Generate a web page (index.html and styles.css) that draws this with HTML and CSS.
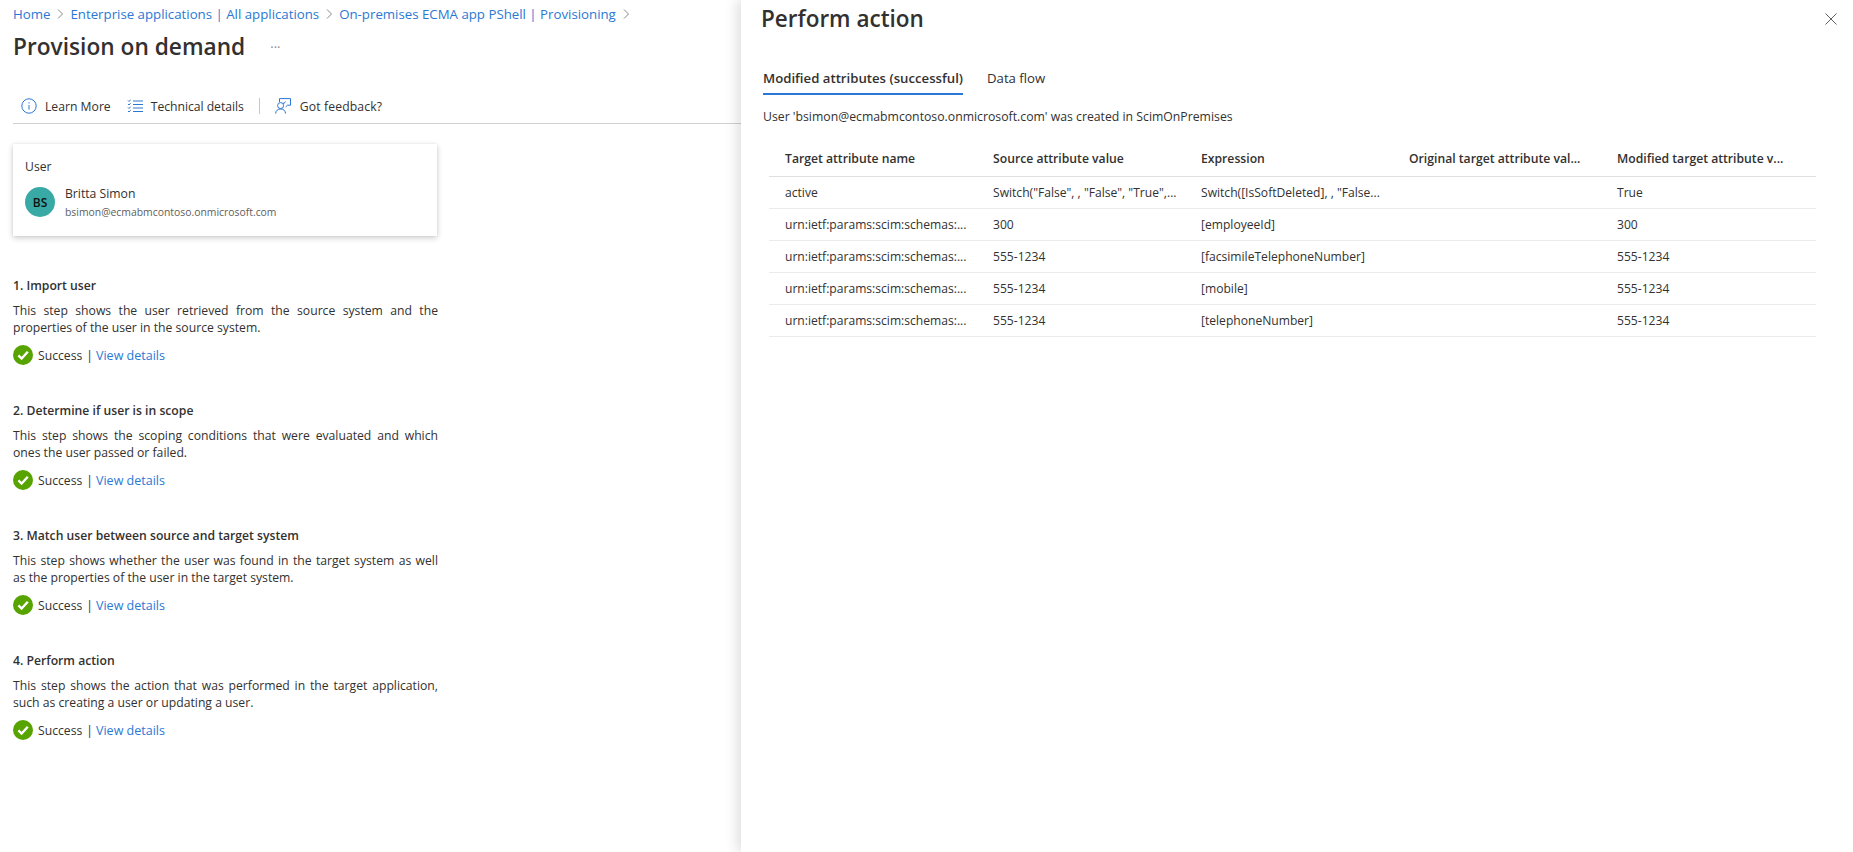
FILE: index.html
```html
<!DOCTYPE html>
<html lang="en">
<head>
<meta charset="utf-8">
<title>Provision on demand</title>
<link rel="stylesheet" href="styles.css">
</head>
<body>
<main class="main">
  <nav class="crumbs">
    <a href="#">Home</a>
    <svg class="chev" viewBox="0 0 8 12"><path d="M2 1.5 6.5 6 2 10.5"/></svg>
    <a href="#">Enterprise applications | All applications</a>
    <svg class="chev" viewBox="0 0 8 12"><path d="M2 1.5 6.5 6 2 10.5"/></svg>
    <a href="#">On-premises ECMA app PShell | Provisioning</a>
    <svg class="chev" viewBox="0 0 8 12"><path d="M2 1.5 6.5 6 2 10.5"/></svg>
  </nav>
  <div class="title-row">
    <h1 class="title">Provision on demand</h1>
    <span class="more">···</span>
  </div>
  <div class="toolbar">
    <span class="tool tool-learn">
      <svg class="ico" viewBox="0 0 16 16"><circle cx="8" cy="8" r="7.2"/><path d="M8 7v4.6M8 4.2v1.3"/></svg>
      Learn More
    </span>
    <span class="tool tool-tech">
      <svg class="ico" viewBox="0 0 16 16"><path d="M6 3h10M6 6.5h10M6 10h10M6 13.5h10M1 2.5l1 1 1.6-1.8M1 6l1 1 1.6-1.8M1 9.5l1 1 1.6-1.8M1 13l1 1 1.6-1.8"/></svg>
      Technical details
    </span>
    <span class="sep"></span>
    <span class="tool tool-feedback">
      <svg class="ico" viewBox="0 0 16 16"><path d="M4.5 4V.6h11v6.6h-3l-1.8 1.7M10.4 3.6 9 5.6 8 4.8"/><circle cx="5.6" cy="7.6" r="3"/><path d="M.6 15.6c.2-3 2.2-4.6 5-4.6s4.8 1.6 5 4.6"/></svg>
      Got feedback?
    </span>
  </div>

  <section class="card">
    <div class="card-label">User</div>
    <div class="persona">
      <span class="avatar">BS</span>
      <div class="persona-text">
        <div class="persona-name">Britta Simon</div>
        <div class="persona-mail">bsimon@ecmabmcontoso.onmicrosoft.com</div>
      </div>
    </div>
  </section>

  <section class="step">
    <h2 class="step-title">1. Import user</h2>
    <p class="step-text">This step shows the user retrieved from the source system and the properties of the user in the source system.</p>
    <div class="status">
      <svg class="check" viewBox="0 0 20 20"><circle cx="10" cy="10" r="10"/><path d="M5.4 10.4 8.6 13.6 14.8 6.8"/></svg>
      <span>Success</span><span class="bar">|</span><a href="#">View details</a>
    </div>
  </section>
  <section class="step">
    <h2 class="step-title">2. Determine if user is in scope</h2>
    <p class="step-text">This step shows the scoping conditions that were evaluated and which ones the user passed or failed.</p>
    <div class="status">
      <svg class="check" viewBox="0 0 20 20"><circle cx="10" cy="10" r="10"/><path d="M5.4 10.4 8.6 13.6 14.8 6.8"/></svg>
      <span>Success</span><span class="bar">|</span><a href="#">View details</a>
    </div>
  </section>
  <section class="step">
    <h2 class="step-title">3. Match user between source and target system</h2>
    <p class="step-text">This step shows whether the user was found in the target system as well as the properties of the user in the target system.</p>
    <div class="status">
      <svg class="check" viewBox="0 0 20 20"><circle cx="10" cy="10" r="10"/><path d="M5.4 10.4 8.6 13.6 14.8 6.8"/></svg>
      <span>Success</span><span class="bar">|</span><a href="#">View details</a>
    </div>
  </section>
  <section class="step">
    <h2 class="step-title">4. Perform action</h2>
    <p class="step-text">This step shows the action that was performed in the target application, such as creating a user or updating a user.</p>
    <div class="status">
      <svg class="check" viewBox="0 0 20 20"><circle cx="10" cy="10" r="10"/><path d="M5.4 10.4 8.6 13.6 14.8 6.8"/></svg>
      <span>Success</span><span class="bar">|</span><a href="#">View details</a>
    </div>
  </section>
</main>

<aside class="panel">
  <header class="panel-head">
    <h2 class="panel-title">Perform action</h2>
    <svg class="close" viewBox="0 0 12 12"><path d="M.5.5l11 11M11.5.5l-11 11"/></svg>
  </header>
  <div class="tabs">
    <span class="tab tab-active">Modified attributes (successful)</span>
    <span class="tab">Data flow</span>
  </div>
  <p class="message">User 'bsimon@ecmabmcontoso.onmicrosoft.com' was created in ScimOnPremises</p>
  <div class="table">
    <div class="row row-head">
      <span>Target attribute name</span><span>Source attribute value</span><span>Expression</span><span>Original target attribute val...</span><span>Modified target attribute v...</span>
    </div>
    <div class="row">
      <span>active</span><span>Switch("False", , "False", "True",...</span><span>Switch([IsSoftDeleted], , "False...</span><span></span><span>True</span>
    </div>
    <div class="row">
      <span>urn:ietf:params:scim:schemas:...</span><span>300</span><span>[employeeId]</span><span></span><span>300</span>
    </div>
    <div class="row">
      <span>urn:ietf:params:scim:schemas:...</span><span>555-1234</span><span>[facsimileTelephoneNumber]</span><span></span><span>555-1234</span>
    </div>
    <div class="row">
      <span>urn:ietf:params:scim:schemas:...</span><span>555-1234</span><span>[mobile]</span><span></span><span>555-1234</span>
    </div>
    <div class="row">
      <span>urn:ietf:params:scim:schemas:...</span><span>555-1234</span><span>[telephoneNumber]</span><span></span><span>555-1234</span>
    </div>
  </div>
</aside>
</body>
</html>
```
FILE: styles.css
```css
* { box-sizing: border-box; }
html, body { height: 100%; }
body {
  margin: 0;
  background: #fff;
  color: #323130;
  font-family: "Open Sans", "Liberation Sans", sans-serif;
  font-size: 12.2px;
  overflow: hidden;
}
a { color: #2b78d4; text-decoration: none; }

.main { width: 741px; height: 852px; }

.crumbs {
  display: flex;
  align-items: center;
  height: 18px;
  margin: 5px 0 0 13px;
  font-size: 13.25px;
}
.chev { width: 8px; height: 12px; margin: 0 6px; fill: none; stroke: #8a8886; stroke-width: 1; }

.title-row { display: flex; align-items: center; height: 32px; margin: 8px 0 0 13px; }
.title { margin: 0; font-size: 22.7px; font-weight: 600; line-height: 32px; }
.more { margin-left: 25px; font-size: 13px; color: #8a8886; letter-spacing: 0; }

.toolbar {
  display: flex;
  align-items: center;
  height: 35px;
  margin: 26px 0 0 13px;
  padding: 0 0 0 8px;
  border-bottom: 1px solid #d2d0ce;
}
.tool { display: flex; align-items: center; gap: 8px; }
.tool-learn { margin-right: 16px; }
.tool-tech { letter-spacing: -.03px; }
.tool-feedback { gap: 9px; letter-spacing: .12px; }
.sep { width: 1px; height: 16px; margin: 0 15px; background: #c8c6c4; }
.ico { width: 16px; height: 16px; fill: none; stroke: #2b78d4; stroke-width: 1; }

.card {
  width: 424px;
  height: 92px;
  margin: 20px 0 41px 13px;
  padding: 13px 12px 0;
  background: #fff;
  box-shadow: 0 1.6px 6px rgba(0, 0, 0, .2), 0 0 2px rgba(0, 0, 0, .08);
}
.card-label { line-height: 20px; }
.persona { display: flex; gap: 10px; margin-top: 10px; }
.avatar {
  display: flex;
  align-items: center;
  justify-content: center;
  width: 30px;
  height: 30px;
  border-radius: 50%;
  background: #38a9a5;
  color: #111;
  font-size: 12px;
  font-weight: 600;
}
.persona-name { line-height: 18px; margin-top: -2px; }
.persona-mail { font-size: 10.4px; line-height: 16px; margin-top: 1px; color: #605e5c; }

.step { width: 438px; height: 125px; padding-left: 13px; }
.step-title { margin: 0; font-size: 12.2px; font-weight: 600; line-height: 17px; }
.step-text { margin: 8px 0 10px; line-height: 17px; text-align: justify; }
.status { display: flex; align-items: center; height: 20px; margin-top: -1px; }
.status a { font-size: 12.5px; }
.check { width: 20px; height: 20px; margin-right: 5px; }
.check circle { fill: #57a300; }
.check path { fill: none; stroke: #fff; stroke-width: 2.4; }
.bar { margin: 0 3px 0 4px; }

.panel {
  position: absolute;
  top: 0;
  left: 741px;
  width: 1112px;
  height: 852px;
  background: #fff;
  box-shadow: -4px 0 12px rgba(0, 0, 0, .13);
}
.panel-head { display: flex; justify-content: space-between; align-items: center; height: 38px; padding: 0 16px 2px 20px; }
.panel-title { margin: 0; font-size: 22.5px; font-weight: 600; }
.close { width: 12px; height: 12px; margin-top: 2px; fill: none; stroke: #605e5c; stroke-width: 1; }

.tabs { display: flex; gap: 24px; margin: 31px 0 0 22px; }
.tab { height: 26px; line-height: 18px; font-size: 13.2px; }
.tab-active { font-weight: 600; border-bottom: 2px solid #2b78d4; }

.message { margin: 13px 0 0 22px; line-height: 18px; font-size: 12.25px; }

.table { margin: 16px 37px 0 28px; font-size: 12.1px; }
.row {
  display: grid;
  grid-template-columns: repeat(4, 208px) 1fr;
  align-items: center;
  height: 32px;
  padding-left: 16px;
  border-bottom: 1px solid #edebe9;
  white-space: nowrap;
}
.row-head { height: 35px; padding-bottom: 1px; font-size: 12.2px; font-weight: 600; border-bottom-color: #e1dfdd; }
```
